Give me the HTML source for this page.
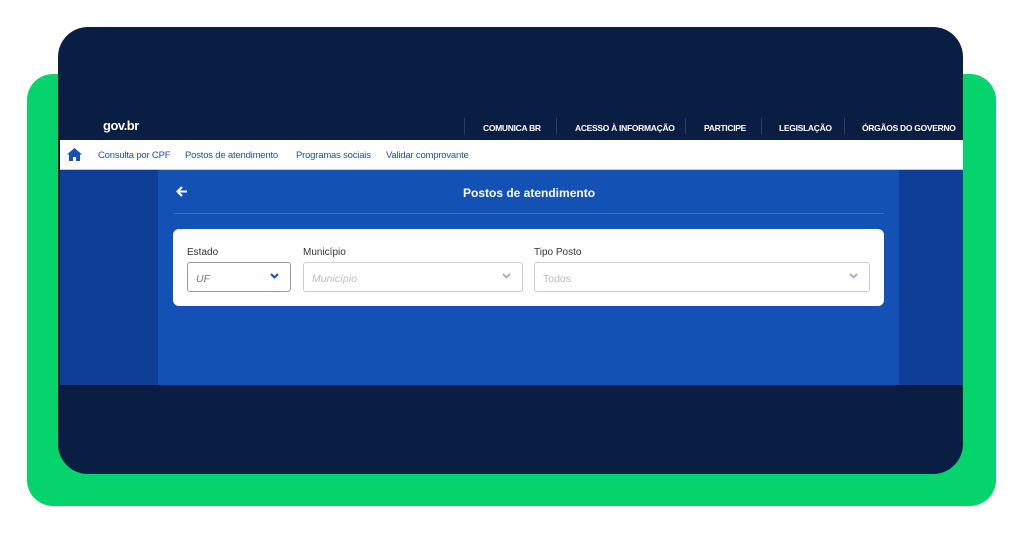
<!DOCTYPE html><html><head><style>
body{margin:0;width:1024px;height:536px;background:#fff;position:relative;overflow:hidden;font-family:"Liberation Sans",sans-serif}
.g{position:absolute;left:27px;top:74px;width:969px;height:432px;background:#05d36b;border-radius:26px}
.d{position:absolute;left:58px;top:27px;width:905px;height:447px;background:#0a1e44;border-radius:30px;overflow:hidden}
.t{position:absolute;top:123px;font-size:8.5px;font-weight:bold;color:#fff;letter-spacing:-.3px}
.sep{position:absolute;top:118px;width:1px;height:16px;background:#2c3f63}
.bar{position:absolute;left:60px;top:140px;width:903px;height:29px;background:#fff;border-bottom:1px solid #b8c8e6}
.bar span{position:absolute;top:10px;font-size:9.5px;color:#1f4fa8;letter-spacing:-.2px}
.blue{position:absolute;left:60px;top:170px;width:903px;height:215px;background:#0c3f95}
.pan{position:absolute;left:158px;top:170px;width:741px;height:215px;background:#1351b4}
.card{position:absolute;left:173px;top:229px;width:711px;height:77px;background:#fff;border-radius:6px}
.lb{position:absolute;top:247px;font-size:10px;color:#333}
.in{position:absolute;top:262px;height:30px;border:1px solid #ccc;border-radius:3px;box-sizing:border-box;font-size:10.5px;font-style:italic;color:#bbb;padding:10px 0 0 8px}
.in svg{position:absolute;right:11px;top:10px}
</style></head><body>
<div class="g"></div><div class="d"></div>
<div style="position:absolute;left:103px;top:118px;color:#fff;font-weight:bold;font-size:13px;letter-spacing:-.5px">gov.br</div>
<div class="sep" style="left:464px"></div><div class="t" style="left:483px">COMUNICA BR</div>
<div class="sep" style="left:556px"></div><div class="t" style="left:575px">ACESSO À INFORMAÇÃO</div>
<div class="sep" style="left:685px"></div><div class="t" style="left:704px">PARTICIPE</div>
<div class="sep" style="left:761px"></div><div class="t" style="left:779px">LEGISLAÇÃO</div>
<div class="sep" style="left:844px"></div><div class="t" style="left:862px">ÓRGÃOS DO GOVERNO</div>
<div class="bar">
<svg style="position:absolute;left:6px;top:7px" width="17" height="15" viewBox="0 0 17 15"><path d="M8.5 1L1 7.5h2V14h4V10h3v4h4V7.5h2z" fill="#1351b4"/></svg>
<span style="left:38px">Consulta por CPF</span><span style="left:125px">Postos de atendimento</span><span style="left:236px">Programas sociais</span><span style="left:326px">Validar comprovante</span></div>
<div class="blue"></div><div class="pan"></div>
<svg style="position:absolute;left:176px;top:186px" width="12" height="11" viewBox="0 0 12 11"><path d="M11 5.5H2M6 1L1.5 5.5 6 10" stroke="#fff" stroke-width="2" fill="none"/></svg>
<div style="position:absolute;left:463px;top:186px;color:#fff;font-size:12px;font-weight:bold">Postos de atendimento</div>
<div style="position:absolute;left:173px;top:213px;width:711px;height:1px;background:#3d6fc2"></div>
<div class="card"></div>
<div class="lb" style="left:187px">Estado</div><div class="lb" style="left:303px">Município</div><div class="lb" style="left:534px">Tipo Posto</div>
<div class="in" style="left:187px;width:104px;border-color:#999;color:#777">UF<svg width="9" height="6" viewBox="0 0 9 6"><path d="M1 1l3.5 3.5L8 1" stroke="#1351b4" stroke-width="2" fill="none"/></svg></div>
<div class="in" style="left:303px;width:220px">Município<svg width="9" height="6" viewBox="0 0 9 6"><path d="M1 1l3.5 3.5L8 1" stroke="#8aa6d8" stroke-width="1.6" fill="none"/></svg></div>
<div class="in" style="left:534px;width:336px;font-style:normal">Todos<svg width="9" height="6" viewBox="0 0 9 6"><path d="M1 1l3.5 3.5L8 1" stroke="#8aa6d8" stroke-width="1.6" fill="none"/></svg></div>
</body></html>
